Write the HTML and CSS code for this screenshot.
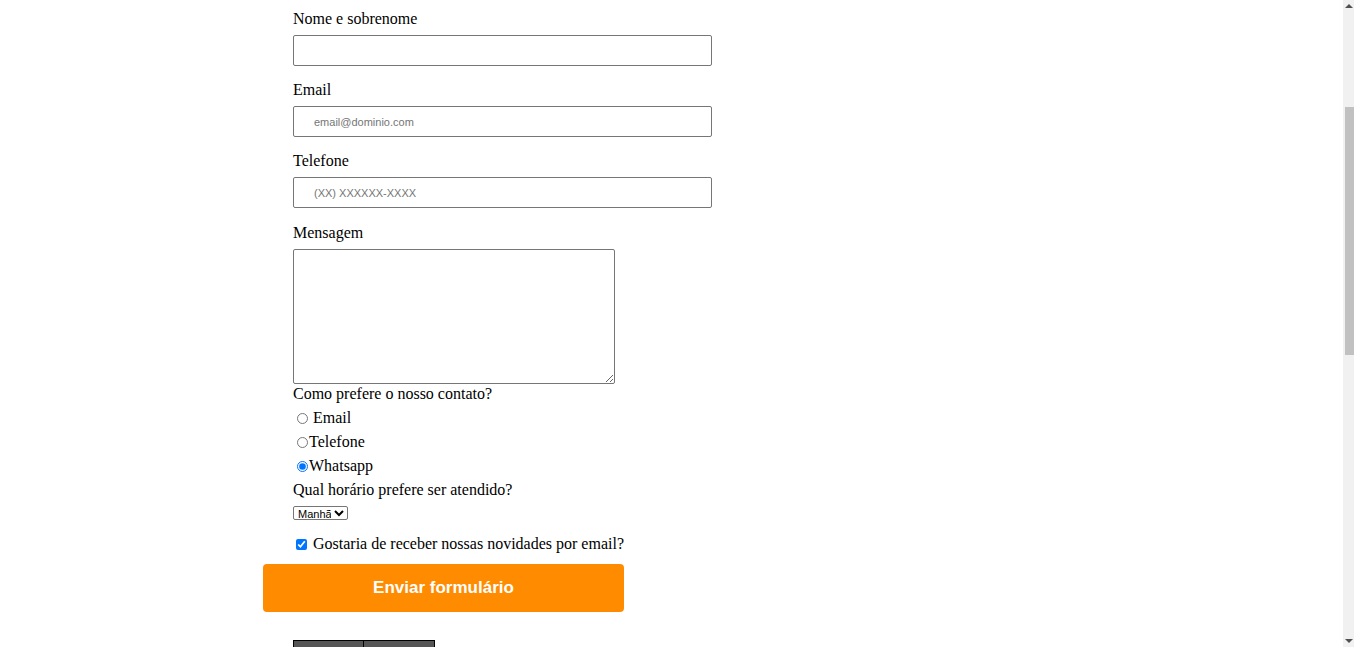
FILE: index.html
```html
<!DOCTYPE html>
<html lang="pt-BR">
<head>
<meta charset="utf-8">
<title>Contato</title>
<link rel="stylesheet" href="styles.css">
</head>
<body>
<main class="page">
  <form class="form">
    <div class="field">
      <label class="label" for="nome">Nome e sobrenome</label>
      <input class="text-input" id="nome" type="text">
    </div>
    <div class="field">
      <label class="label" for="email">Email</label>
      <input class="text-input" id="email" type="email" placeholder="email@dominio.com">
    </div>
    <div class="field field-tel">
      <label class="label" for="tel">Telefone</label>
      <input class="text-input" id="tel" type="tel" placeholder="(XX) XXXXXX-XXXX">
    </div>
    <div class="field field-last">
      <label class="label" for="msg">Mensagem</label>
      <textarea class="textarea" id="msg"></textarea>
    </div>
    <div class="line line-first">Como prefere o nosso contato?</div>
    <div class="radio-row"><input class="radio" type="radio" name="contato" id="r1"><label for="r1">&nbsp;Email</label></div>
    <div class="radio-row"><input class="radio" type="radio" name="contato" id="r2"><label for="r2">Telefone</label></div>
    <div class="radio-row"><input class="radio" type="radio" name="contato" id="r3" checked><label for="r3">Whatsapp</label></div>
    <div class="line">Qual horário prefere ser atendido?</div>
    <select class="select">
      <option>Manhã</option>
      <option>Tarde</option>
      <option>Noite</option>
    </select>
    <div class="check-row"><input class="check" type="checkbox" id="news" checked><label for="news">Gostaria de receber nossas novidades por email?</label></div>
  </form>
  <button class="submit" type="button">Enviar formulário</button>
  <table class="table">
    <tr><td class="cell cell-a"></td><td class="cell cell-b"></td></tr>
  </table>
</main>
<div class="scrollbar">
  <div class="sb-arrow sb-up"></div>
  <div class="sb-track"><div class="sb-thumb"></div></div>
  <div class="sb-arrow sb-down"></div>
</div>
</body>
</html>
```
FILE: styles.css
```css
html, body {
  margin: 0;
  padding: 0;
  overflow: hidden;
  height: 100%;
  background: #fff;
}
body {
  font-family: "Liberation Serif", "Times New Roman", serif;
  font-size: 16px;
  color: #000;
}
.page {
  padding: 10px 0 0 263px;
}
.form {
  padding-left: 30px;
  display: flex;
  flex-direction: column;
  align-items: flex-start;
}
.field {
  display: flex;
  flex-direction: column;
  align-items: flex-start;
  margin-bottom: 15px;
}
.field-tel {
  margin-bottom: 16px;
}
.field-last {
  margin-bottom: 0;
}
.label {
  display: block;
  line-height: 18px;
  height: 18px;
  margin-bottom: 7px;
}
.text-input {
  box-sizing: border-box;
  width: 419px;
  height: 31px;
  margin: 0;
  border: 1px solid #767676;
  border-radius: 2px;
  padding: 0 0 0 20px;
  font-family: "Liberation Sans", Arial, sans-serif;
  font-size: 11px;
  color: #000;
  background: #fff;
}
.text-input::placeholder {
  color: #757575;
}
.textarea {
  box-sizing: border-box;
  width: 322px;
  height: 135px;
  margin: 0;
  border: 1px solid #767676;
  border-radius: 2px;
  padding: 2px;
  font-family: "Liberation Mono", monospace;
  font-size: 13px;
  display: block;
}
.line {
  height: 24px;
  line-height: 24px;
}
.line-first {
  height: 22px;
  line-height: 20px;
}
.radio-row, .check-row {
  height: 24px;
  display: flex;
  align-items: center;
  line-height: 24px;
}
.radio {
  width: 11px;
  height: 11px;
  margin: 0 1px 0 4px;
}
.select {
  margin-top: 4px;
  width: 55px;
  height: 14px;
  padding: 0;
  font-family: "Liberation Sans", Arial, sans-serif;
  font-size: 11px;
  border: 1px solid #767676;
  border-radius: 2px;
  background: #fff;
  color: #000;
}
.check-row {
  margin-top: 12px;
}
.check {
  width: 11px;
  height: 11px;
  margin: 0 6px 0 3px;
}
.submit {
  display: block;
  margin-top: 8px;
  width: 361px;
  height: 48px;
  border: none;
  border-radius: 4px;
  background: #ff8c00;
  color: #fff;
  font-family: "Liberation Sans", Arial, sans-serif;
  font-weight: bold;
  font-size: 17px;
  cursor: pointer;
}
.table {
  margin: 28px 0 0 30px;
  border-collapse: collapse;
}
.cell {
  background: #555;
  border: 1px solid #000;
  height: 30px;
  padding: 0;
}
.cell-a { width: 69px; }
.cell-b { width: 70px; }
.scrollbar {
  position: fixed;
  top: 0;
  right: 0;
  width: 11px;
  height: 100%;
  background: #f1f1f1;
  display: flex;
  flex-direction: column;
}
.sb-arrow {
  height: 12px;
  display: flex;
  align-items: center;
  justify-content: center;
}
.sb-up::before {
  content: "";
  border-left: 4px solid transparent;
  border-right: 4px solid transparent;
  border-bottom: 4px solid #505050;
}
.sb-down::before {
  content: "";
  border-left: 4px solid transparent;
  border-right: 4px solid transparent;
  border-top: 4px solid #505050;
}
.sb-track {
  flex: 1;
  padding-top: 95px;
}
.sb-thumb {
  margin-left: 2px;
  width: 9px;
  height: 248px;
  background: #c1c1c1;
}
```
